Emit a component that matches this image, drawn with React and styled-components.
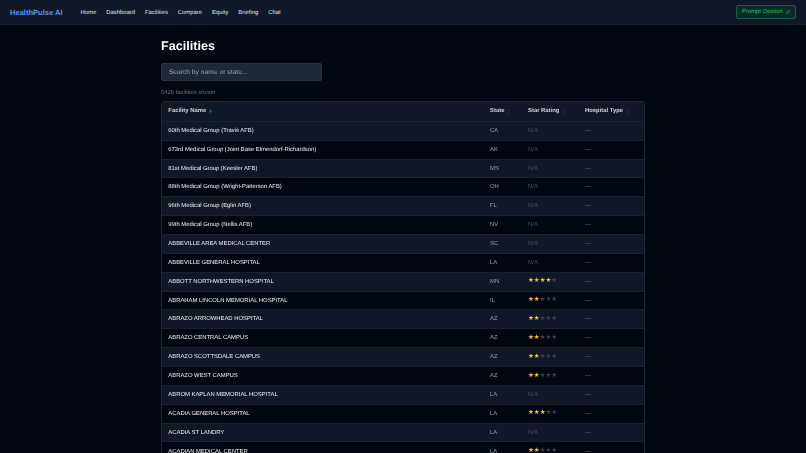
import React from 'react';
import styled, { createGlobalStyle } from 'styled-components';
import { ExternalLink, ArrowUp, ChevronsUpDown } from 'lucide-react';

const GlobalStyle = createGlobalStyle`
  html, body {
    margin: 0;
    height: 100%;
    overflow: hidden;
    background: #030712;
    font-family: "Liberation Sans", Arial, sans-serif;
    text-rendering: geometricPrecision;
  }
  #root {
    opacity: 0.999;
  }
`;

const Nav = styled.nav`
  height: 25px;
  box-sizing: border-box;
  display: flex;
  align-items: center;
  justify-content: space-between;
  padding: 0 10px;
  background: #111827;
  border-bottom: 1px solid #1a2230;
`;

const NavLeft = styled.div`
  display: flex;
  align-items: center;
  gap: 10px;
`;

const Brand = styled.span`
  font-size: 7.56px;
  font-weight: 700;
  color: #5599f0;
  margin-right: 8px;
`;

const NavLink = styled.a`
  padding-top: 1px;
  font-size: 5.88px;
  color: #e5e7eb;
`;

const PromptButton = styled.button`
  display: flex;
  align-items: center;
  gap: 3px;
  height: 14px;
  width: 60px;
  padding: 0 5px;
  box-sizing: border-box;
  font: 5.88px "Liberation Sans", Arial, sans-serif;
  text-rendering: geometricPrecision;
  color: #22c55e;
  background: #0f2a2b;
  border: 1px solid #15604a;
  border-radius: 2px;
  white-space: nowrap;
`;

const Main = styled.main`
  width: 484px;
  margin: 0 auto;
  padding-top: 13px;
`;

const Title = styled.h1`
  margin: 0;
  font-size: 12.6px;
  line-height: 16px;
  font-weight: 700;
  color: #fff;
`;

const Search = styled.input`
  display: block;
  box-sizing: border-box;
  width: 161px;
  height: 18px;
  margin-top: 9px;
  padding: 0 6.7px;
  background: #1f2937;
  border: 1px solid #2b3544;
  border-radius: 2px;
  font: 6.72px "Liberation Sans", Arial, sans-serif;
  text-rendering: geometricPrecision;
  color: #fff;
  &::placeholder {
    color: #9ca3af;
  }
`;

const Count = styled.p`
  margin: 8px 0 4px;
  font-size: 5.88px;
  line-height: 8px;
  color: #6b7280;
`;

const TableWrap = styled.div`
  border: 1px solid #1f2937;
  border-radius: 3px;
  overflow: hidden;
`;

const Table = styled.table`
  width: 100%;
  border-collapse: collapse;
  table-layout: fixed;
`;

const Th = styled.th`
  height: 18.87px;
  padding: 0 0 0 6.3px;
  width: ${p => (p.$w ? `${p.$w}px` : 'auto')};
  text-align: left;
  font-size: 5.88px;
  font-weight: 700;
  color: #d1d5db;
  background: #111827;
`;

const HeadLabel = styled.span`
  display: inline-flex;
  align-items: center;
  gap: 1.5px;
`;

const SortIcon = styled.span`
  display: inline-flex;
  color: ${p => (p.$active ? '#3b82f6' : '#4b5563')};
`;

const Row = styled.tr`
  background: ${p => (p.$odd ? '#111827' : '#030712')};
  border-top: 1px solid #1a2230;
`;

const Td = styled.td`
  height: 18.87px;
  box-sizing: border-box;
  padding: 0 0 0 6.3px;
  font-size: 5.88px;
  color: ${p => p.$color || '#9ca3af'};
  white-space: nowrap;
`;

const Stars = styled.span`
  display: inline-flex;
  vertical-align: middle;
  font-size: 6.5px;
  line-height: 1;
`;

const Star = styled.span`
  color: ${p => (p.$on ? '#fbbf24' : '#374151')};
`;

const links = ['Home', 'Dashboard', 'Facilities', 'Compare', 'Equity', 'Briefing', 'Chat'];

const facilities = [
  ['60th Medical Group (Travis AFB)', 'CA', 0],
  ['673rd Medical Group (Joint Base Elmendorf-Richardson)', 'AK', 0],
  ['81st Medical Group (Keesler AFB)', 'MS', 0],
  ['88th Medical Group (Wright-Patterson AFB)', 'OH', 0],
  ['96th Medical Group (Eglin AFB)', 'FL', 0],
  ['99th Medical Group (Nellis AFB)', 'NV', 0],
  ['ABBEVILLE AREA MEDICAL CENTER', 'SC', 0],
  ['ABBEVILLE GENERAL HOSPITAL', 'LA', 0],
  ['ABBOTT NORTHWESTERN HOSPITAL', 'MN', 4],
  ['ABRAHAM LINCOLN MEMORIAL HOSPITAL', 'IL', 2],
  ['ABRAZO ARROWHEAD HOSPITAL', 'AZ', 2],
  ['ABRAZO CENTRAL CAMPUS', 'AZ', 2],
  ['ABRAZO SCOTTSDALE CAMPUS', 'AZ', 2],
  ['ABRAZO WEST CAMPUS', 'AZ', 2],
  ['ABROM KAPLAN MEMORIAL HOSPITAL', 'LA', 0],
  ['ACADIA GENERAL HOSPITAL', 'LA', 3],
  ['ACADIA ST LANDRY', 'LA', 0],
  ['ACADIAN MEDICAL CENTER', 'LA', 2],
];

const Rating = ({ value }) => {
  if (!value) return 'N/A';
  return (
    <Stars>
      {[1, 2, 3, 4, 5].map(n => (
        <Star key={n} $on={n <= value}>★</Star>
      ))}
    </Stars>
  );
};

const Head = ({ label, w, active }) => (
  <Th $w={w}>
    <HeadLabel>
      {label}
      <SortIcon $active={active}>
        {active ? <ArrowUp size={5} strokeWidth={2.5} /> : <ChevronsUpDown size={5} strokeWidth={2} />}
      </SortIcon>
    </HeadLabel>
  </Th>
);

const App = () => (
  <>
    <GlobalStyle />
    <Nav>
      <NavLeft>
        <Brand>HealthPulse AI</Brand>
        {links.map(l => <NavLink key={l}>{l}</NavLink>)}
      </NavLeft>
      <PromptButton>
        Prompt Opinion
        <ExternalLink size={6} />
      </PromptButton>
    </Nav>
    <Main>
      <Title>Facilities</Title>
      <Search placeholder="Search by name or state..." />
      <Count>5426 facilities shown</Count>
      <TableWrap>
        <Table>
          <thead>
            <tr>
              <Head label="Facility Name" active />
              <Head label="State" w={31.7} />
              <Head label="Star Rating" w={50.7} />
              <Head label="Hospital Type" w={59} />
            </tr>
          </thead>
          <tbody>
            {facilities.map(([name, state, stars], i) => (
              <Row key={name} $odd={i % 2 === 0}>
                <Td $color="#f3f4f6">{name}</Td>
                <Td>{state}</Td>
                <Td $color="#4b5563"><Rating value={stars} /></Td>
                <Td $color="#6b7280">—</Td>
              </Row>
            ))}
          </tbody>
        </Table>
      </TableWrap>
    </Main>
  </>
);

export default App;
